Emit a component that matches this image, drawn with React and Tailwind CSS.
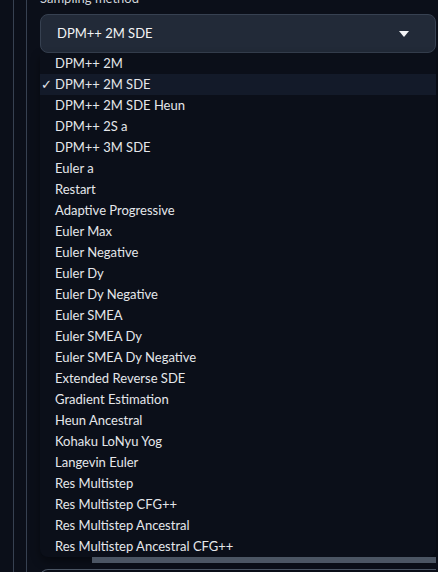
import React from 'react';

const SAMPLERS = [
  'DPM++ 2M',
  'DPM++ 2M SDE',
  'DPM++ 2M SDE Heun',
  'DPM++ 2S a',
  'DPM++ 3M SDE',
  'Euler a',
  'Restart',
  'Adaptive Progressive',
  'Euler Max',
  'Euler Negative',
  'Euler Dy',
  'Euler Dy Negative',
  'Euler SMEA',
  'Euler SMEA Dy',
  'Euler SMEA Dy Negative',
  'Extended Reverse SDE',
  'Gradient Estimation',
  'Heun Ancestral',
  'Kohaku LoNyu Yog',
  'Langevin Euler',
  'Res Multistep',
  'Res Multistep CFG++',
  'Res Multistep Ancestral',
  'Res Multistep Ancestral CFG++',
];

const selected = 'DPM++ 2M SDE';

export default function App() {
  return (
    <div
      className="h-[572px] w-[438px] overflow-hidden bg-[#0b0f19] pl-[13px] flex text-[13px]"
      style={{ fontFamily: 'Lato, "Noto Sans", sans-serif' }}
    >
      <div className="flex flex-1 border-l border-[#374151] pl-[12px]">
        <div className="flex-1 border-l border-[#374151] pl-[13px] pr-[2px]">
          <div className="-mt-[11px] mb-[7px] h-[18px] leading-[18px] text-[#d1d5db]">Sampling method</div>

          <div className="flex h-[39px] items-center justify-between rounded-lg border border-[#374151] bg-[#222a38] pl-[16px] pr-[26px] text-[#f3f4f6]">
            <span>{selected}</span>
            <svg width="10" height="6" viewBox="0 0 10 6">
              <path d="M0 0h10L5 6z" fill="#f3f4f6" />
            </svg>
          </div>

          <ul className="rounded-b-lg bg-[#0b0f19] shadow-[0_4px_10px_rgba(0,0,0,0.4)]">
            {SAMPLERS.map((name) => (
              <li
                key={name}
                className={`flex h-[21px] items-center text-[#e5e7eb] ${name === selected ? 'bg-[#131a29]' : ''}`}
              >
                <span className="w-[15px] pl-[1px] text-[#e5e7eb]">{name === selected ? '✓' : ''}</span>
                <span>{name}</span>
              </li>
            ))}
          </ul>

          <div className="ml-[52px] h-[6px] bg-[#4b5563]" />
          <div className="mt-[6px] h-[10px] rounded-tl-lg border-l border-t border-[#4b5563]" />
        </div>
      </div>
    </div>
  );
}
